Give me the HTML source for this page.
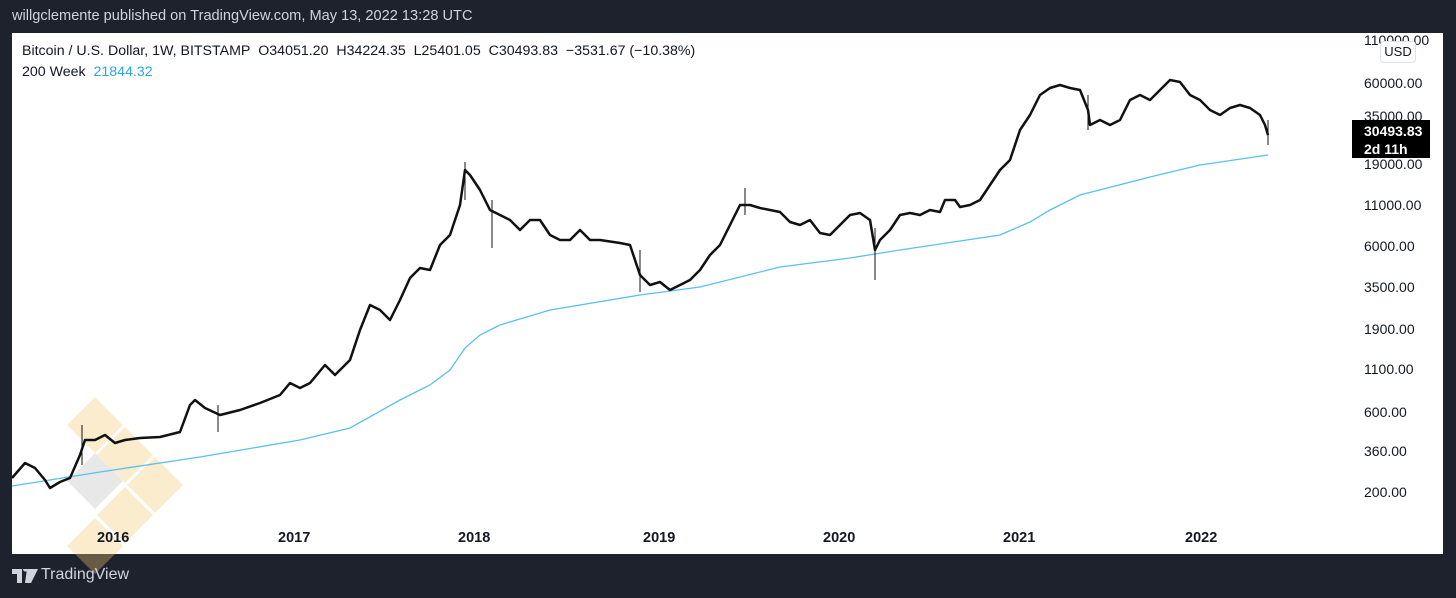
<!DOCTYPE html>
<html><head><meta charset="utf-8"><style>
body{margin:0;width:1456px;height:598px;background:#1e222d;font-family:"Liberation Sans",sans-serif;overflow:hidden;position:relative}
.t{position:absolute;white-space:nowrap}
</style></head><body>
<div class="t" style="left:12px;top:8px;color:#d1d4dc;font-size:14.6px">willgclemente published on TradingView.com, May 13, 2022 13:28 UTC</div>
<div style="position:absolute;left:12px;top:33px;width:1431px;height:521px;background:#fff"></div>
<svg style="position:absolute;left:0;top:0" width="1456" height="598">
<g fill="rgba(240,200,110,0.35)">
<polygon points="95,397 123,425 95,453 67,425"/>
<polygon points="95,453 123,481 95,509 67,481" fill="rgba(180,180,180,0.3)"/>
<polygon points="125,427 153,455 125,483 97,455"/>
<polygon points="155,457 183,485 155,513 127,485"/>
<polygon points="125,487 153,515 125,543 97,515"/>
<polygon points="95,518 123,546 95,574 67,546"/>
</g>
<polyline fill="none" stroke="#5bc0eb" stroke-width="1.3" points="12,486 50,480 100,472 200,457 300,440 350,428 400,400 430,385 450,370 465,348 480,335 500,325 550,310 640,295 700,287 780,267 850,258 900,250 1000,235 1030,222 1050,210 1080,195 1150,177 1200,165 1268,155"/>
<polyline fill="none" stroke="#111" stroke-width="2.5" stroke-linejoin="round" points="12,478 25,463 35,468 45,480 50,488 60,482 70,478 80,455 85,440 95,440 105,435 115,443 125,440 140,438 160,437 180,432 190,405 195,400 205,408 220,415 240,410 260,403 280,395 290,383 300,388 310,383 325,365 335,375 350,360 360,330 370,305 380,310 390,320 400,300 410,278 420,268 430,270 440,245 450,235 460,205 465,170 470,175 480,190 490,210 500,215 510,220 520,230 530,220 540,220 550,235 560,240 570,240 580,230 590,240 600,240 620,243 630,245 640,275 650,285 660,282 670,290 680,285 690,280 700,270 710,255 720,245 730,225 740,205 750,205 760,208 770,210 780,212 790,222 800,225 810,220 820,233 830,235 840,225 850,215 860,213 870,220 875,250 880,240 890,230 900,215 910,213 920,215 930,210 940,212 945,200 955,200 960,207 970,205 980,200 990,185 1000,170 1010,160 1020,130 1030,115 1040,95 1050,88 1060,85 1070,88 1080,90 1088,110 1090,125 1100,120 1110,125 1120,120 1130,100 1140,95 1150,100 1160,90 1170,80 1180,82 1190,95 1200,100 1210,110 1220,115 1230,108 1240,105 1250,108 1260,115 1265,125 1268,135"/>
<g stroke="#111" stroke-width="1">
<line x1="82" y1="425" x2="82" y2="465"/><line x1="465" y1="162" x2="465" y2="200"/><line x1="492" y1="200" x2="492" y2="248"/><line x1="640" y1="250" x2="640" y2="292"/><line x1="875" y1="228" x2="875" y2="280"/><line x1="218" y1="405" x2="218" y2="432"/><line x1="1268" y1="120" x2="1268" y2="145"/><line x1="1088" y1="95" x2="1088" y2="130"/><line x1="745" y1="188" x2="745" y2="215"/>
</g>
</svg>
<div class="t" style="left:22px;top:43px;font-size:14.2px;color:#131722">Bitcoin / U.S. Dollar, 1W, BITSTAMP&nbsp; O34051.20&nbsp; H34224.35&nbsp; L25401.05&nbsp; C30493.83&nbsp; −3531.67 (−10.38%)</div>
<div class="t" style="left:22px;top:64px;font-size:14.2px;color:#131722">200 Week&nbsp; <span style="color:#2ea6e0">21844.32</span></div>
<div style="position:absolute;left:1364px;top:44px;width:150px;font-size:14px;color:#131722;line-height:1">
<div class="t" style="left:0;top:-11px">110000.00</div>
<div class="t" style="left:0;top:32px">60000.00</div>
<div class="t" style="left:0;top:65px">35000.00</div>
<div class="t" style="left:0;top:113px">19000.00</div>
<div class="t" style="left:0;top:154px">11000.00</div>
<div class="t" style="left:0;top:195px">6000.00</div>
<div class="t" style="left:0;top:236px">3500.00</div>
<div class="t" style="left:0;top:278px">1900.00</div>
<div class="t" style="left:0;top:318px">1100.00</div>
<div class="t" style="left:0;top:361px">600.00</div>
<div class="t" style="left:0;top:400px">360.00</div>
<div class="t" style="left:0;top:441px">200.00</div>
</div>
<div class="t" style="left:1380px;top:41px;width:34px;height:20px;background:#fff;border:1px solid #e0e3eb;border-radius:4px;font-size:13px;line-height:20px;text-align:center;color:#131722">USD</div>
<div class="t" style="left:1352px;top:120px;width:78px;height:38px;background:#000;color:#fff;font-size:14px;font-weight:bold;line-height:18px;padding-left:12px;box-sizing:border-box;padding-top:2px">30493.83<br>2d 11h</div>
<div style="font-size:14.5px;color:#131722;font-weight:bold">
<div class="t" style="left:97px;top:530px">2016</div>
<div class="t" style="left:278px;top:530px">2017</div>
<div class="t" style="left:458px;top:530px">2018</div>
<div class="t" style="left:643px;top:530px">2019</div>
<div class="t" style="left:823px;top:530px">2020</div>
<div class="t" style="left:1003px;top:530px">2021</div>
<div class="t" style="left:1185px;top:530px">2022</div>
</div>
<svg style="position:absolute;left:12px;top:569px" width="26" height="14"><path d="M0 0h10v14h-5v-9h-5z M11 0a2.5 2.5 0 1 1 0 .1z M15 0h11l-7 14h-6z" fill="#d1d4dc"/></svg>
<div class="t" style="left:41px;top:566px;color:#d1d4dc;font-size:16px">TradingView</div>
</body></html>
